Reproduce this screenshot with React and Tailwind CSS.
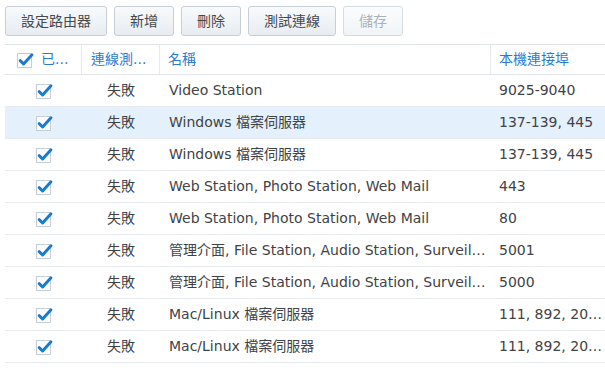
import React from 'react';

const rows = [
  { name: 'Video Station', port: '9025-9040' },
  { name: 'Windows 檔案伺服器', port: '137-139, 445', active: true },
  { name: 'Windows 檔案伺服器', port: '137-139, 445' },
  { name: 'Web Station, Photo Station, Web Mail', port: '443' },
  { name: 'Web Station, Photo Station, Web Mail', port: '80' },
  { name: '管理介面, File Station, Audio Station, Surveillance Station', port: '5001' },
  { name: '管理介面, File Station, Audio Station, Surveillance Station', port: '5000' },
  { name: 'Mac/Linux 檔案伺服器', port: '111, 892, 2049' },
  { name: 'Mac/Linux 檔案伺服器', port: '111, 892, 2049' },
];

const Check = () => (
  <svg width="19" height="17" viewBox="0 0 19 17" className="shrink-0">
    <rect x="0.5" y="2.5" width="14" height="14" fill="#fff" stroke="#c6cdd6" />
    <path d="M3.2 9.6 L6.6 13 L15 3.8" fill="none" stroke="#1a79d4" strokeWidth="2.9" strokeLinecap="round" strokeLinejoin="round" />
  </svg>
);

const Btn = ({ children, disabled }) => (
  <button
    className={
      disabled
        ? 'h-[30px] px-[15px] rounded-[3px] border border-[#d6dce3] bg-gradient-to-b from-[#fbfcfd] to-[#f1f4f7] text-[#a9b1ba]'
        : 'h-[30px] px-[15px] rounded-[3px] border border-[#c6ced8] bg-gradient-to-b from-[#f8fafc] to-[#e8ecf1] text-[#44494f]'
    }
  >
    {children}
  </button>
);

export default function App() {
  return (
    <div
      className="w-[605px] h-[370px] overflow-hidden bg-white text-[14px]"
      style={{ fontFamily: '"DejaVu Sans", "Noto Sans CJK TC", sans-serif' }}
    >
      {/* Toolbar */}
      <div className="flex gap-[7px] pl-[5px] pt-[6px]">
        <Btn>設定路由器</Btn>
        <Btn>新增</Btn>
        <Btn>刪除</Btn>
        <Btn>測試連線</Btn>
        <Btn disabled>儲存</Btn>
      </div>

      {/* Table */}
      <div className="ml-[5px] mt-[8px] w-[620px]">
        <div className="flex h-[31px] items-center border-y border-[#e1e5ea] text-[#2b7ad2]">
          <div className="w-[77px] h-full flex items-center gap-[5px] pl-[12px] border-r border-[#e6e9ed]">
            <Check />
            <span>已...</span>
          </div>
          <div className="w-[78px] h-full flex items-center pl-[9px] border-r border-[#e6e9ed]">連線測...</div>
          <div className="w-[331px] h-full flex items-center pl-[8px] border-r border-[#e6e9ed]">名稱</div>
          <div className="flex-1 h-full flex items-center pl-[8px]">本機連接埠</div>
        </div>

        {rows.map((r, i) => (
          <div
            key={i}
            className={
              r.active
                ? 'flex h-[32px] items-center border-b border-[#e8ebef] bg-[#e4f1fc] text-[#3f4246]'
                : 'flex h-[32px] items-center border-b border-[#e8ebef] text-[#3f4246]'
            }
          >
            <div className="w-[77px] flex justify-center pl-[3px]">
              <Check />
            </div>
            <div className="w-[78px] text-center">失敗</div>
            <div className="w-[331px] pl-[9px] pr-[2px] truncate">{r.name}</div>
            <div className="w-[112px] pl-[8px] truncate">{r.port}</div>
          </div>
        ))}
      </div>
    </div>
  );
}
